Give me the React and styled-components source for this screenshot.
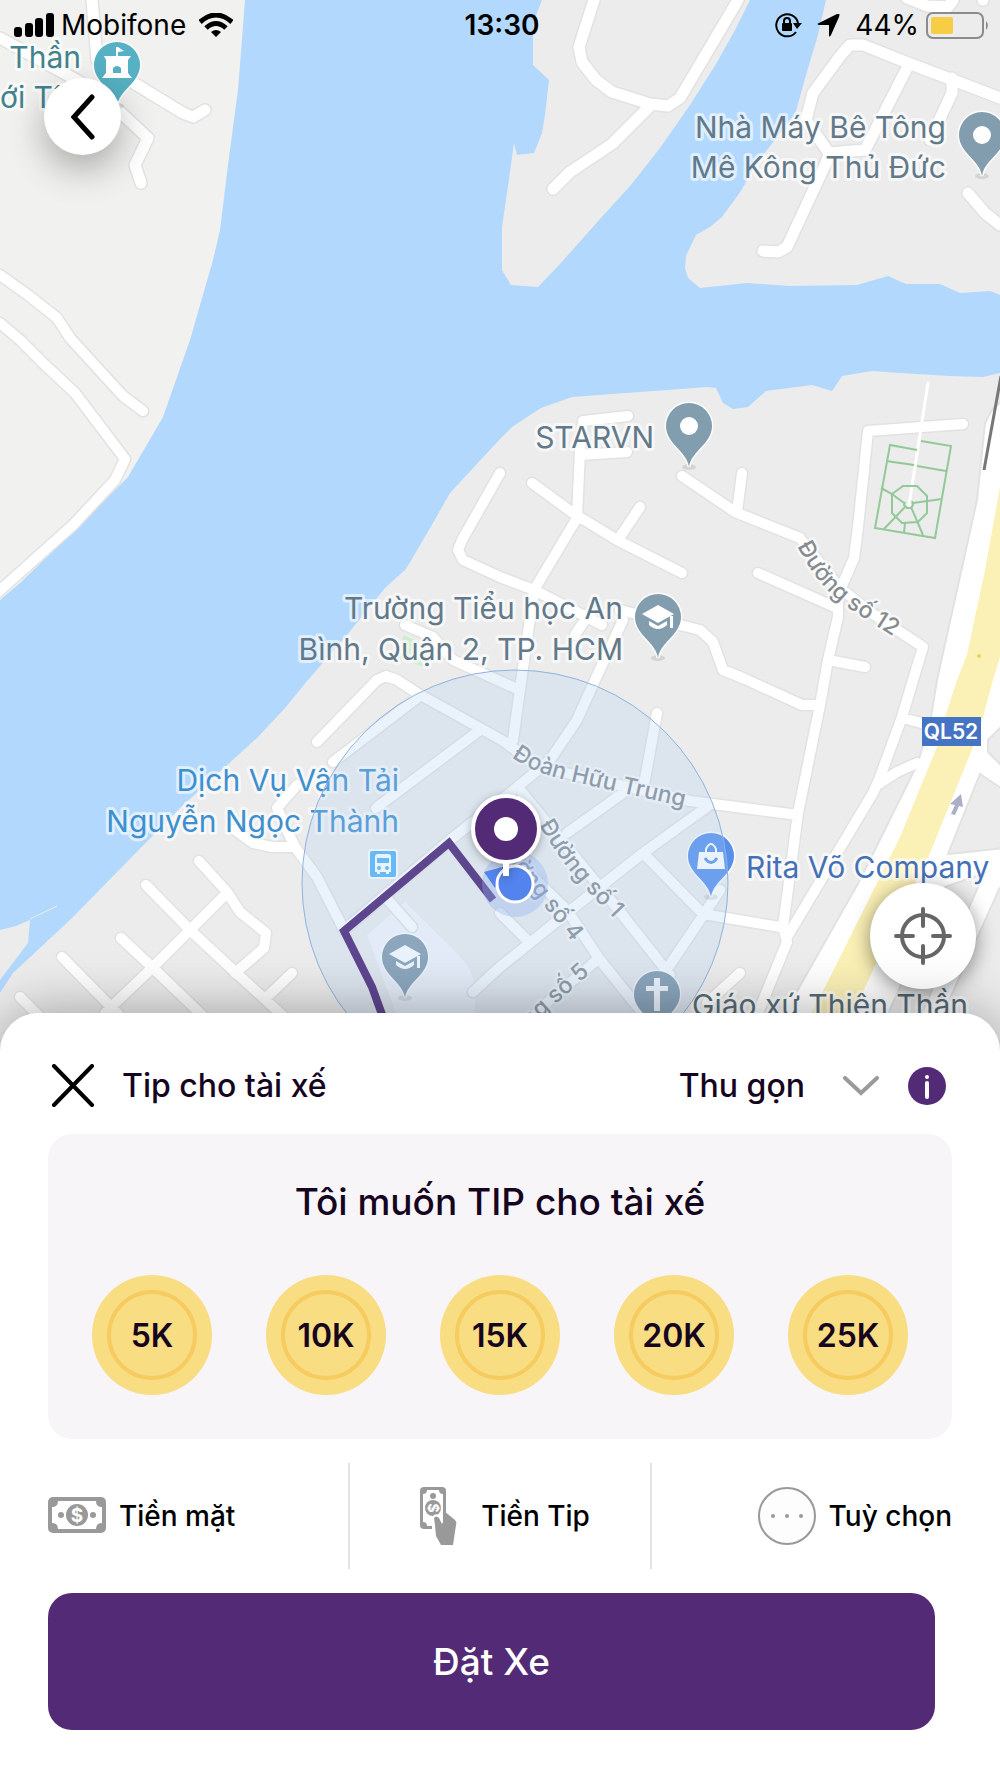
import styled, { createGlobalStyle } from "styled-components";

const tips = ["5K", "10K", "15K", "20K", "25K"];

const land = {
  west: "0,0 245,0 238,90 228,165 220,230 213,260 190,340 163,417 128,477 115,490 75,530 20,583 0,600",
  north:
    "542,0 535,18 533,30 533,65 549,80 545,115 542,133 534,153 517,155 514,143 511,165 502,227 502,270 511,285 538,287 560,264 600,219 630,186 660,148 690,105 716,64 735,30 750,0",
  east: "826,0 818,35 806,75 795,115 775,140 755,165 741,191 722,217 710,227 696,235 686,256 685,268 688,278 700,288 747,283 790,286 857,285 888,276 906,284 940,284 960,293 990,291 1000,295 1000,0",
  south:
    "1000,373 983,377 950,376 900,373 872,371 842,376 832,391 812,385 766,391 748,407 733,409 723,403 716,388 708,387 572,397 541,408 512,427 500,439 450,493 433,523 406,569 385,588 347,635 308,680 285,708 258,737 180,808 70,920 13,973 0,993 0,1060 1000,1060",
  islet: "0,930 16,926 30,920 28,943 0,980",
};

const wideRoads = [
  "M0 38L80 82L120 112L148 138L135 165L141 183",
  "M92 0L97 60L137 85L183 113L193 117L205 110",
  "M594 0L579 47L582 62L596 80L612 92L650 104L668 106L680 98L738 0",
  "M650 106L612 144L570 172L553 189",
  "M907 -2L927 6L948 7L953 0",
  "M983 -2V0",
  "M1000 98L953 80L908 63L863 45L850 45L841 55L813 93L806 120L829 153L865 150L907 68",
  "M952 78L952 93L930 140",
  "M829 153L826 163L787 247L778 252L763 251",
  "M968 193L985 213L1000 225",
];

const roads = [
  "M0 275L28 295L57 318L70 338L123 396L143 411",
  "M0 323L20 340L45 365L75 393L125 459L115 480L73 525L-2 592",
  "M628 416L583 421L580 450L577 518L534 590L522 675L513 740",
  "M627 452L580 455",
  "M532 483L573 513L617 540L682 573",
  "M640 507L618 540",
  "M682 476L735 512L800 538L840 588L870 612L923 647L913 680L902 717L880 777L873 793L787 937",
  "M742 473L737 512",
  "M758 573L837 608",
  "M963 424L868 431L858 527L854 558L838 595L838 617L828 660L820 705L798 813L783 927L787 942L758 1013",
  "M828 660L865 667",
  "M500 473L462 540L458 550L463 560L500 577L534 590L602 625",
  "M590 612L575 635",
  "M620 610L700 630L713 642L723 670L745 679L802 705L820 705",
  "M623 620L595 680L577 720L550 760L510 793L450 840L344 930",
  "M405 625L433 637L453 660L515 688",
  "M317 742L377 680L386 676L397 680L417 693L480 728L505 742L535 765L570 774L690 801L798 815",
  "M417 698L333 762",
  "M480 730L376 808",
  "M657 713L643 790",
  "M623 793L567 833",
  "M707 807L643 853L567 913L500 967L473 992",
  "M645 855L703 914L780 927",
  "M720 890L700 920L665 972",
  "M903 718L925 724",
  "M877 785L897 772L917 763",
  "M520 790L617 908L670 975",
  "M505 850L567 910L600 960L645 1016",
  "M597 960L550 1000L530 1020",
  "M500 913L530 943",
  "M740 973L707 1003",
  "M199 861L227 892L240 912L266 933L264 948L235 973",
  "M146 885L190 930L233 970L283 1016",
  "M227 893L153 967L105 1013",
  "M121 938L153 968L203 1016",
  "M62 957L118 1014",
  "M20 997L40 1017",
  "M292 973L267 997",
  "M297 785L277 808L287 830L295 847L317 877L344 930",
  "M235 830L253 843L272 847L293 847",
  "M388 900L412 927",
  "M793 995L790 1010",
];

const placeLabels = [
  { x: 81, y: 68, anchor: "end", color: "#42838d", text: "Thần" },
  { x: 0, y: 108, anchor: "start", color: "#42838d", text: "ới Tân" },
  { x: 946, y: 138, anchor: "end", text: "Nhà Máy Bê Tông" },
  { x: 946, y: 178, anchor: "end", text: "Mê Kông Thủ Đức" },
  { x: 654, y: 448, anchor: "end", text: "STARVN" },
  { x: 623, y: 619, anchor: "end", text: "Trường Tiểu học An" },
  { x: 623, y: 660, anchor: "end", text: "Bình, Quận 2, TP. HCM" },
  { x: 399, y: 791, anchor: "end", color: "#3d90cf", text: "Dịch Vụ Vận Tải" },
  { x: 399, y: 832, anchor: "end", color: "#3d90cf", text: "Nguyễn Ngọc Thành" },
  { x: 746, y: 878, anchor: "start", color: "#4570b8", text: "Rita Võ Company" },
  { x: 692, y: 1016, anchor: "start", color: "#566c79", text: "Giáo xứ Thiên Thần" },
];

const streetLabels = [
  { id: "street-12", d: "M797 546Q820 590 850 609T920 654", text: "Đường số 12" },
  { id: "street-dht", d: "M512 757Q530 772 570 781L720 815", text: "Đoàn Hữu Trung" },
  { id: "street-1", d: "M539 825Q560 860 581 884L650 956", text: "Đường số 1" },
  { id: "street-4", d: "M495 843L540 901L600 976", text: "Đường số 4" },
  { id: "street-5", d: "M500 1060L545 1014L620 946", text: "Đường số 5" },
];

function Pin({ x, y, color, children }) {
  return (
    <g transform={`translate(${x} ${y})`}>
      <ellipse cx="0" cy="41" rx="7" ry="3" fill="#000" opacity="0.1" />
      <path
        d="M0 41C-2 25 -23 18 -23 0A23 23 0 1 1 23 0C23 18 2 25 0 41Z"
        fill={color}
        stroke="#fff"
        strokeOpacity="0.85"
        strokeWidth="3"
        paintOrder="stroke"
      />
      {children}
    </g>
  );
}

function GraduationCap() {
  return (
    <g fill="#fff">
      <path d="M0 -12L16 -3L0 6L-16 -3Z" />
      <path d="M-9 4L0 9L9 4V8Q0 16 -9 8Z" />
      <path d="M12 -1H15V11H12Z" />
    </g>
  );
}

function CityMap() {
  return (
    <MapDrawing
      viewBox="0 0 1000 1053"
      preserveAspectRatio="xMidYMin slice"
      role="img"
      aria-label="Bản đồ"
    >
      <rect width="1000" height="1060" fill="#b3d8fd" />
      <polygon points={land.west} fill="#f1f1ef" />
      <g fill="#ececec">
        <polygon points={land.north} />
        <polygon points={land.east} />
        <polygon points={land.south} />
        <polygon points={land.islet} />
      </g>
      <path d="M30 919L57 906" stroke="#ececec" />
      <path d="M403 635L415 640L408 662L400 656ZM415 654L427 668L413 663Z" fill="#d0edcf" />
      <path d="M367 935L405 902L457 953Q470 965 475 983V1016H397Z" fill="#f4f6f9" />

      <g fill="none" stroke="#e2e2e2" strokeLinecap="round" strokeLinejoin="round">
        <path d={wideRoads.join("")} strokeWidth="14" />
        <path d={roads.join("")} strokeWidth="13" />
        <path d="M1004 862L990 885L945 985L930 1020" strokeWidth="22" />
      </g>
      <path
        d="M1004 400L993 408L985 423L977 500L937 680L930 723L917 765L860 880L783 1016H887L945 887L1004 866V848L948 854L980 774L1004 790V768L988 752V740L1004 724Z"
        fill="#fff"
        stroke="#e2e2e2"
        strokeWidth="2"
      />
      <g fill="none" stroke="#fff" strokeLinecap="round" strokeLinejoin="round">
        <path d="M1004 862L990 885L945 985L930 1020" strokeWidth="18" />
        <path d={wideRoads.join("")} strokeWidth="11" />
        <path d={roads.join("")} strokeWidth="10" />
        <path d="M928 383L909 505" strokeWidth="3" />
      </g>
      <path
        d="M1000 487L985 570L967 655L957 680L945 717L937 747L900 837L877 883L825 987L810 1016H852L873 970L930 853L973 747L983 717L993 680L1000 657Z"
        fill="#fbf1b6"
      />
      <circle cx="979" cy="656" r="2" fill="#efcf60" />
      <path d="M1001 376L984 470" stroke="#777" strokeWidth="3" />

      <g fill="none" stroke="#93c998" strokeWidth="2">
        <path d="M917 450L890 445L875 528L935 538L951 446L921 441M886 461L914 465M917 466L946 471" />
        <path d="M903 486H917L927 496V513L918 522L902 523L892 513V494Z" />
        <path d="M881 488L892 494L904 503M913 503L942 499M911 507L923 535M905 507L884 529M905 523L904 533" />
        <path d="M905 502L904 505L907 508H911L913 505L912 501" />
      </g>
      <path d="M961 794L950 804L955 805L951 814L955 815L959 806L963 807Z" fill="#a9aec9" />

      {streetLabels.map((label) => (
        <StreetLabel key={label.id}>
          <path id={label.id} d={label.d} fill="none" stroke="none" />
          <text>
            <textPath href={`#${label.id}`}>{label.text}</textPath>
          </text>
        </StreetLabel>
      ))}

      <rect x="922" y="717" width="59" height="29" fill="#4674c5" />
      <RouteNumber x="951" y="739">
        QL52
      </RouteNumber>

      {placeLabels.map((label) => (
        <PlaceLabel
          key={label.text}
          x={label.x}
          y={label.y}
          textAnchor={label.anchor}
          fill={label.color || "#62798a"}
        >
          {label.text}
        </PlaceLabel>
      ))}

      <Pin x={117} y={65} color="#55b1c3">
        <path
          d="M-1 -18H1L7 -14L1 -13V-9H14L11 -5V8L15 13H-15L-11 8V-5L-13 -9H-1Z"
          fill="#fff"
        />
        <path d="M-4 8V3Q0 -1 4 3V8Z" fill="#55b1c3" />
      </Pin>
      <Pin x={982} y={135} color="#829dae">
        <circle r="9" fill="#fff" />
      </Pin>
      <Pin x={689} y={426} color="#829dae">
        <circle r="9" fill="#fff" />
      </Pin>
      <Pin x={658} y={617} color="#829dae">
        <GraduationCap />
      </Pin>
      <Pin x={405} y={957} color="#7f99ab">
        <GraduationCap />
      </Pin>
      <Pin x={657} y={994} color="#7f99ab">
        <path d="M-3 -16H3V-8H11V-3H3V17H-3V-3H-11V-8H-3Z" fill="#fff" />
      </Pin>
      <Pin x={711} y={856} color="#5690ec">
        <path d="M-12 -4H12L14 13H-14Z" fill="#fff" />
        <path d="M-5 -3V-7Q0 -17 5 -7V-3" fill="none" stroke="#fff" strokeWidth="2" />
        <path d="M-6 2Q0 11 6 2" fill="none" stroke="#5690ec" strokeWidth="3" />
      </Pin>

      <g transform="translate(369 850)">
        <rect width="28" height="28" rx="3" fill="#4db5f9" stroke="#fff" strokeWidth="2" />
        <path
          d="M6 22V7Q6 4 9 4H19Q22 4 22 7V22H20V24H17V22H11V24H8V22Z"
          fill="#fff"
        />
        <path d="M8 8H20V13H8Z" fill="#4db5f9" />
        <circle cx="10" cy="18" r="2" fill="#4db5f9" />
        <circle cx="18" cy="18" r="2" fill="#4db5f9" />
      </g>

      <circle cx="515" cy="883" r="213" fill="#accdf4" fillOpacity="0.26" stroke="#8fb3dc" />
      <path
        d="M493 900L449 843L344 931L372 987L384 1020"
        fill="none"
        stroke="#5e468f"
        strokeWidth="8"
      />
      <circle cx="515" cy="884" r="33" fill="#8fb2f0" fillOpacity="0.35" />
      <path d="M484 872L506 866L495 888Z" fill="#5383ec" />
      <circle cx="515" cy="884" r="18" fill="#5383ec" stroke="#fff" strokeWidth="3" />
      <DropPin>
        <path d="M503 862H509V876H503Z" fill="#fff" />
        <circle cx="506" cy="829" r="33" fill="#532a76" stroke="#fff" strokeWidth="4" />
        <circle cx="506" cy="829" r="12" fill="#fff" />
      </DropPin>
    </MapDrawing>
  );
}

export default function App() {
  return (
    <>
      <GlobalStyle />
      <Screen>
        <MapArea>
          <CityMap />
          <StatusBar>
            <StatusGroup>
              <svg width="40" height="24" viewBox="0 0 40 24" aria-hidden="true">
                <rect x="0" y="14" width="8" height="10" rx="3" />
                <rect x="11" y="10" width="8" height="14" rx="3" />
                <rect x="21" y="5" width="8" height="19" rx="3" />
                <rect x="32" y="0" width="8" height="24" rx="3" />
              </svg>
              <span>Mobifone</span>
              <WifiIcon width="34" height="24" viewBox="0 0 34 24" aria-hidden="true">
                <path d="M1 9Q17 -5 33 9" fill="none" stroke="#000" strokeWidth="5" />
                <path d="M7 15Q17 6 27 15" fill="none" stroke="#000" strokeWidth="5" />
                <path d="M12 19Q17 15 22 19L17 24Z" />
              </WifiIcon>
            </StatusGroup>
            <Clock>13:30</Clock>
            <StatusGroup $end>
              <svg width="28" height="26" viewBox="0 0 28 26" aria-hidden="true">
                <path
                  d="M22 20A11 11 0 1 1 24 11"
                  fill="none"
                  stroke="#000"
                  strokeWidth="2"
                />
                <path d="M19 11H28L23 17Z" />
                <rect x="8" y="11" width="10" height="8" rx="1" />
                <path d="M10 12V9A3 3 0 0 1 16 9V12" fill="none" stroke="#000" strokeWidth="2" />
              </svg>
              <ArrowIcon width="23" height="23" viewBox="0 0 23 23" aria-hidden="true">
                <path d="M22 0Q23 0 22 3L14 21Q12 24 12 21V11H2Q-1 10 2 9L20 0Z" />
              </ArrowIcon>
              <span>44%</span>
              <svg width="64" height="28" viewBox="0 0 64 28" aria-hidden="true">
                <rect
                  x="1"
                  y="2"
                  width="56"
                  height="25"
                  rx="6"
                  fill="none"
                  stroke="#8b8b8b"
                  strokeWidth="2"
                />
                <rect x="5" y="6" width="22" height="17" rx="2" fill="#f7cd46" />
                <path d="M60 10Q64 14 60 19Z" fill="#8b8b8b" />
              </svg>
            </StatusGroup>
          </StatusBar>
          <BackButton type="button" aria-label="Quay lại">
            <svg width="24" height="46" viewBox="0 0 24 46" aria-hidden="true">
              <path
                d="M21 3L3 23L21 43"
                fill="none"
                stroke="#000"
                strokeWidth="5"
                strokeLinecap="round"
              />
            </svg>
          </BackButton>
          <LocateButton type="button" aria-label="Vị trí của tôi">
            <svg width="58" height="58" viewBox="0 0 58 58" aria-hidden="true">
              <g fill="none" stroke="#666" strokeWidth="4" strokeLinecap="round">
                <circle cx="29" cy="29" r="21" />
                <path d="M29 2V19M29 39V56M2 29H19M39 29H56" />
              </g>
            </svg>
          </LocateButton>
        </MapArea>

        <Sheet>
          <SheetHeader>
            <IconButton type="button" aria-label="Đóng">
              <svg width="50" height="44" viewBox="0 0 50 44" aria-hidden="true">
                <path
                  d="M6 2L44 41M44 2L6 41"
                  stroke="#000"
                  strokeWidth="4"
                  strokeLinecap="round"
                />
              </svg>
            </IconButton>
            <SheetTitle>Tip cho tài xế</SheetTitle>
            <CollapseButton type="button">
              Thu gọn
              <svg width="36" height="20" viewBox="0 0 36 20" aria-hidden="true">
                <path
                  d="M2 2L18 17L34 2"
                  fill="none"
                  stroke="#9a9a9a"
                  strokeWidth="4"
                  strokeLinecap="round"
                />
              </svg>
            </CollapseButton>
            <IconButton type="button" aria-label="Thông tin">
              <svg width="40" height="40" viewBox="0 0 40 40" aria-hidden="true">
                <circle cx="20" cy="20" r="19" fill="#532a76" />
                <circle cx="20" cy="11" r="2" fill="#fff" />
                <path d="M20 17V31" stroke="#fff" strokeWidth="4" strokeLinecap="round" />
              </svg>
            </IconButton>
          </SheetHeader>

          <TipPanel>
            <PanelTitle>Tôi muốn TIP cho tài xế</PanelTitle>
            <Coins>
              {tips.map((tip) => (
                <Coin key={tip} type="button">
                  <CoinRing>{tip}</CoinRing>
                </Coin>
              ))}
            </Coins>
          </TipPanel>

          <Options>
            <Option type="button" $align="flex-start">
              <svg width="58" height="58" viewBox="0 0 58 58" aria-hidden="true">
                <rect y="10" width="58" height="36" rx="5" fill="#999" />
                <path
                  d="M10 14H48Q48 20 54 20V36Q48 36 48 42H10Q10 36 4 36V20Q10 20 10 14Z"
                  fill="#fff"
                />
                <circle cx="29" cy="28" r="11" fill="#999" />
                <circle cx="13" cy="28" r="3" fill="#999" />
                <circle cx="45" cy="28" r="3" fill="#999" />
                <DollarSign x="29" y="35">
                  $
                </DollarSign>
              </svg>
              Tiền mặt
            </Option>
            <Option type="button" $align="center" $divided>
              <svg width="58" height="58" viewBox="0 0 58 58" aria-hidden="true">
                <rect x="10" y="0" width="26" height="42" rx="4" fill="#999" />
                <path
                  d="M17 3H29Q29 7 33 7V39H17Q17 35 13 35V7Q17 7 17 3Z"
                  fill="#fff"
                />
                <path d="M22 38H28V43H22Z" fill="#fff" />
                <circle cx="23" cy="9" r="3" fill="#999" />
                <circle cx="23" cy="21" r="8" fill="#999" />
                <DollarSign x="23" y="26" transform="rotate(90 23 21)" $small>
                  $
                </DollarSign>
                <path d="M24 34V30Q27 27 29 32" fill="none" stroke="#fff" strokeWidth="3" />
                <path
                  d="M24 31Q26 28 29 31L32 37L34 33V24L45 33Q47 35 46 38L43 58H31L26 49L25 38Z"
                  fill="#999"
                />
              </svg>
              Tiền Tip
            </Option>
            <Option type="button" $align="flex-end">
              <svg width="58" height="58" viewBox="0 0 58 58" aria-hidden="true">
                <circle cx="29" cy="29" r="28" fill="#fdfdfd" stroke="#999" strokeWidth="2" />
                <g fill="#999">
                  <circle cx="15" cy="29" r="2" />
                  <circle cx="29" cy="29" r="2" />
                  <circle cx="43" cy="29" r="2" />
                </g>
              </svg>
              Tuỳ chọn
            </Option>
          </Options>

          <BookButton type="button">Đặt Xe</BookButton>
        </Sheet>
      </Screen>
    </>
  );
}

const GlobalStyle = createGlobalStyle`
  * {
    box-sizing: border-box;
  }
  body {
    margin: 0;
    background-color: #fff;
    color: #16051f;
    font-family: Inter, "Liberation Sans", sans-serif;
  }
  button {
    padding: 0;
    border: none;
    background: none;
    color: inherit;
    font: inherit;
    cursor: pointer;
  }
  svg {
    flex-shrink: 0;
  }
`;

const Screen = styled.div`
  display: flex;
  flex-direction: column;
  min-height: 100vh;
`;

const MapArea = styled.main`
  position: relative;
  display: flex;
  flex: 1;
  flex-direction: column;
  min-height: 600px;
  padding-bottom: 64px;
  overflow: hidden;
`;

const MapDrawing = styled.svg`
  position: absolute;
  inset: 0;
  width: 100%;
  height: 100%;
`;

const PlaceLabel = styled.text`
  font-size: 30px;
  stroke: rgba(255, 255, 255, 0.6);
  stroke-width: 6px;
  stroke-linejoin: round;
  paint-order: stroke;
`;

const StreetLabel = styled.g`
  fill: #858b90;
  font-size: 23px;
  font-weight: 500;
  stroke: rgba(255, 255, 255, 0.6);
  stroke-width: 5px;
  stroke-linejoin: round;
  paint-order: stroke;
`;

const RouteNumber = styled.text`
  fill: #fff;
  font-size: 21px;
  font-weight: 600;
  text-anchor: middle;
`;

const DropPin = styled.g`
  filter: drop-shadow(0 2px 4px rgba(0, 0, 0, 0.3));
`;

const StatusBar = styled.header`
  position: relative;
  display: grid;
  grid-template-columns: 1fr auto 1fr;
  align-items: center;
  height: 50px;
  padding: 0 10px 0 14px;
  color: #000;
  font-size: 28px;
`;

const StatusGroup = styled.div`
  display: flex;
  align-items: center;
  justify-content: ${({ $end }) => ($end ? "flex-end" : "flex-start")};
  gap: 7px;
`;

const WifiIcon = styled.svg`
  margin-left: 6px;
`;

const ArrowIcon = styled.svg`
  margin: 0 8px;
`;

const Clock = styled.time`
  font-weight: 600;
`;

const RoundButton = styled.button`
  position: relative;
  display: flex;
  align-items: center;
  justify-content: center;
  border-radius: 50%;
  background-color: #fff;
`;

const BackButton = styled(RoundButton)`
  width: 77px;
  height: 77px;
  margin: 28px 0 0 44px;
  box-shadow: 0 14px 36px rgba(0, 0, 0, 0.3);
`;

const LocateButton = styled(RoundButton)`
  align-self: flex-end;
  width: 106px;
  height: 106px;
  margin: auto 24px 0 0;
  box-shadow: 0 4px 20px rgba(0, 0, 0, 0.45);
`;

const Sheet = styled.section`
  position: relative;
  margin-top: -40px;
  padding: 0 48px 48px;
  border-radius: 38px 38px 0 0;
  background-color: #fff;
  box-shadow: 0 0 56px rgba(0, 0, 0, 0.35);
`;

const SheetHeader = styled.div`
  display: flex;
  align-items: center;
  height: 121px;
  padding: 24px 5px 0 0;
  font-size: 32px;
  font-weight: 500;
`;

const IconButton = styled.button`
  display: flex;
`;

const SheetTitle = styled.h2`
  margin: 0 auto 0 24px;
  font-size: inherit;
  font-weight: inherit;
`;

const CollapseButton = styled.button`
  display: flex;
  align-items: center;
  gap: 38px;
  margin-right: 28px;
`;

const TipPanel = styled.div`
  padding: 44px;
  border-radius: 24px;
  background-color: #f8f5f9;
`;

const PanelTitle = styled.h1`
  margin: 0 0 49px;
  font-size: 37px;
  font-weight: 500;
  line-height: 48px;
  text-align: center;
`;

const Coins = styled.div`
  display: flex;
  flex-wrap: wrap;
  justify-content: space-between;
  gap: 12px;
`;

const Coin = styled.button`
  display: flex;
  align-items: center;
  justify-content: center;
  width: 120px;
  height: 120px;
  border-radius: 50%;
  background-color: #f8dd82;
`;

const CoinRing = styled.span`
  display: flex;
  align-items: center;
  justify-content: center;
  width: 90px;
  height: 90px;
  border: 4px solid #f6cc60;
  border-radius: 50%;
  font-size: 32px;
  font-weight: 600;
`;

const Options = styled.div`
  display: grid;
  grid-template-columns: 75fr 76fr 75fr;
  margin: 24px 0;
`;

const Option = styled.button`
  display: flex;
  align-items: center;
  justify-content: ${({ $align }) => $align};
  gap: 13px;
  height: 106px;
  border: solid #e3e3e3;
  border-width: ${({ $divided }) => ($divided ? "0 2px" : "0")};
  color: #000;
  font-size: 28px;
  font-weight: 500;
`;

const DollarSign = styled.text`
  fill: #fff;
  font-size: ${({ $small }) => ($small ? "14px" : "19px")};
  font-weight: 700;
  text-anchor: middle;
`;

const BookButton = styled.button`
  display: block;
  width: calc(100% - 17px);
  height: 137px;
  border-radius: 24px;
  background-color: #532a76;
  color: #fff;
  font-size: 37px;
  font-weight: 500;
`;
